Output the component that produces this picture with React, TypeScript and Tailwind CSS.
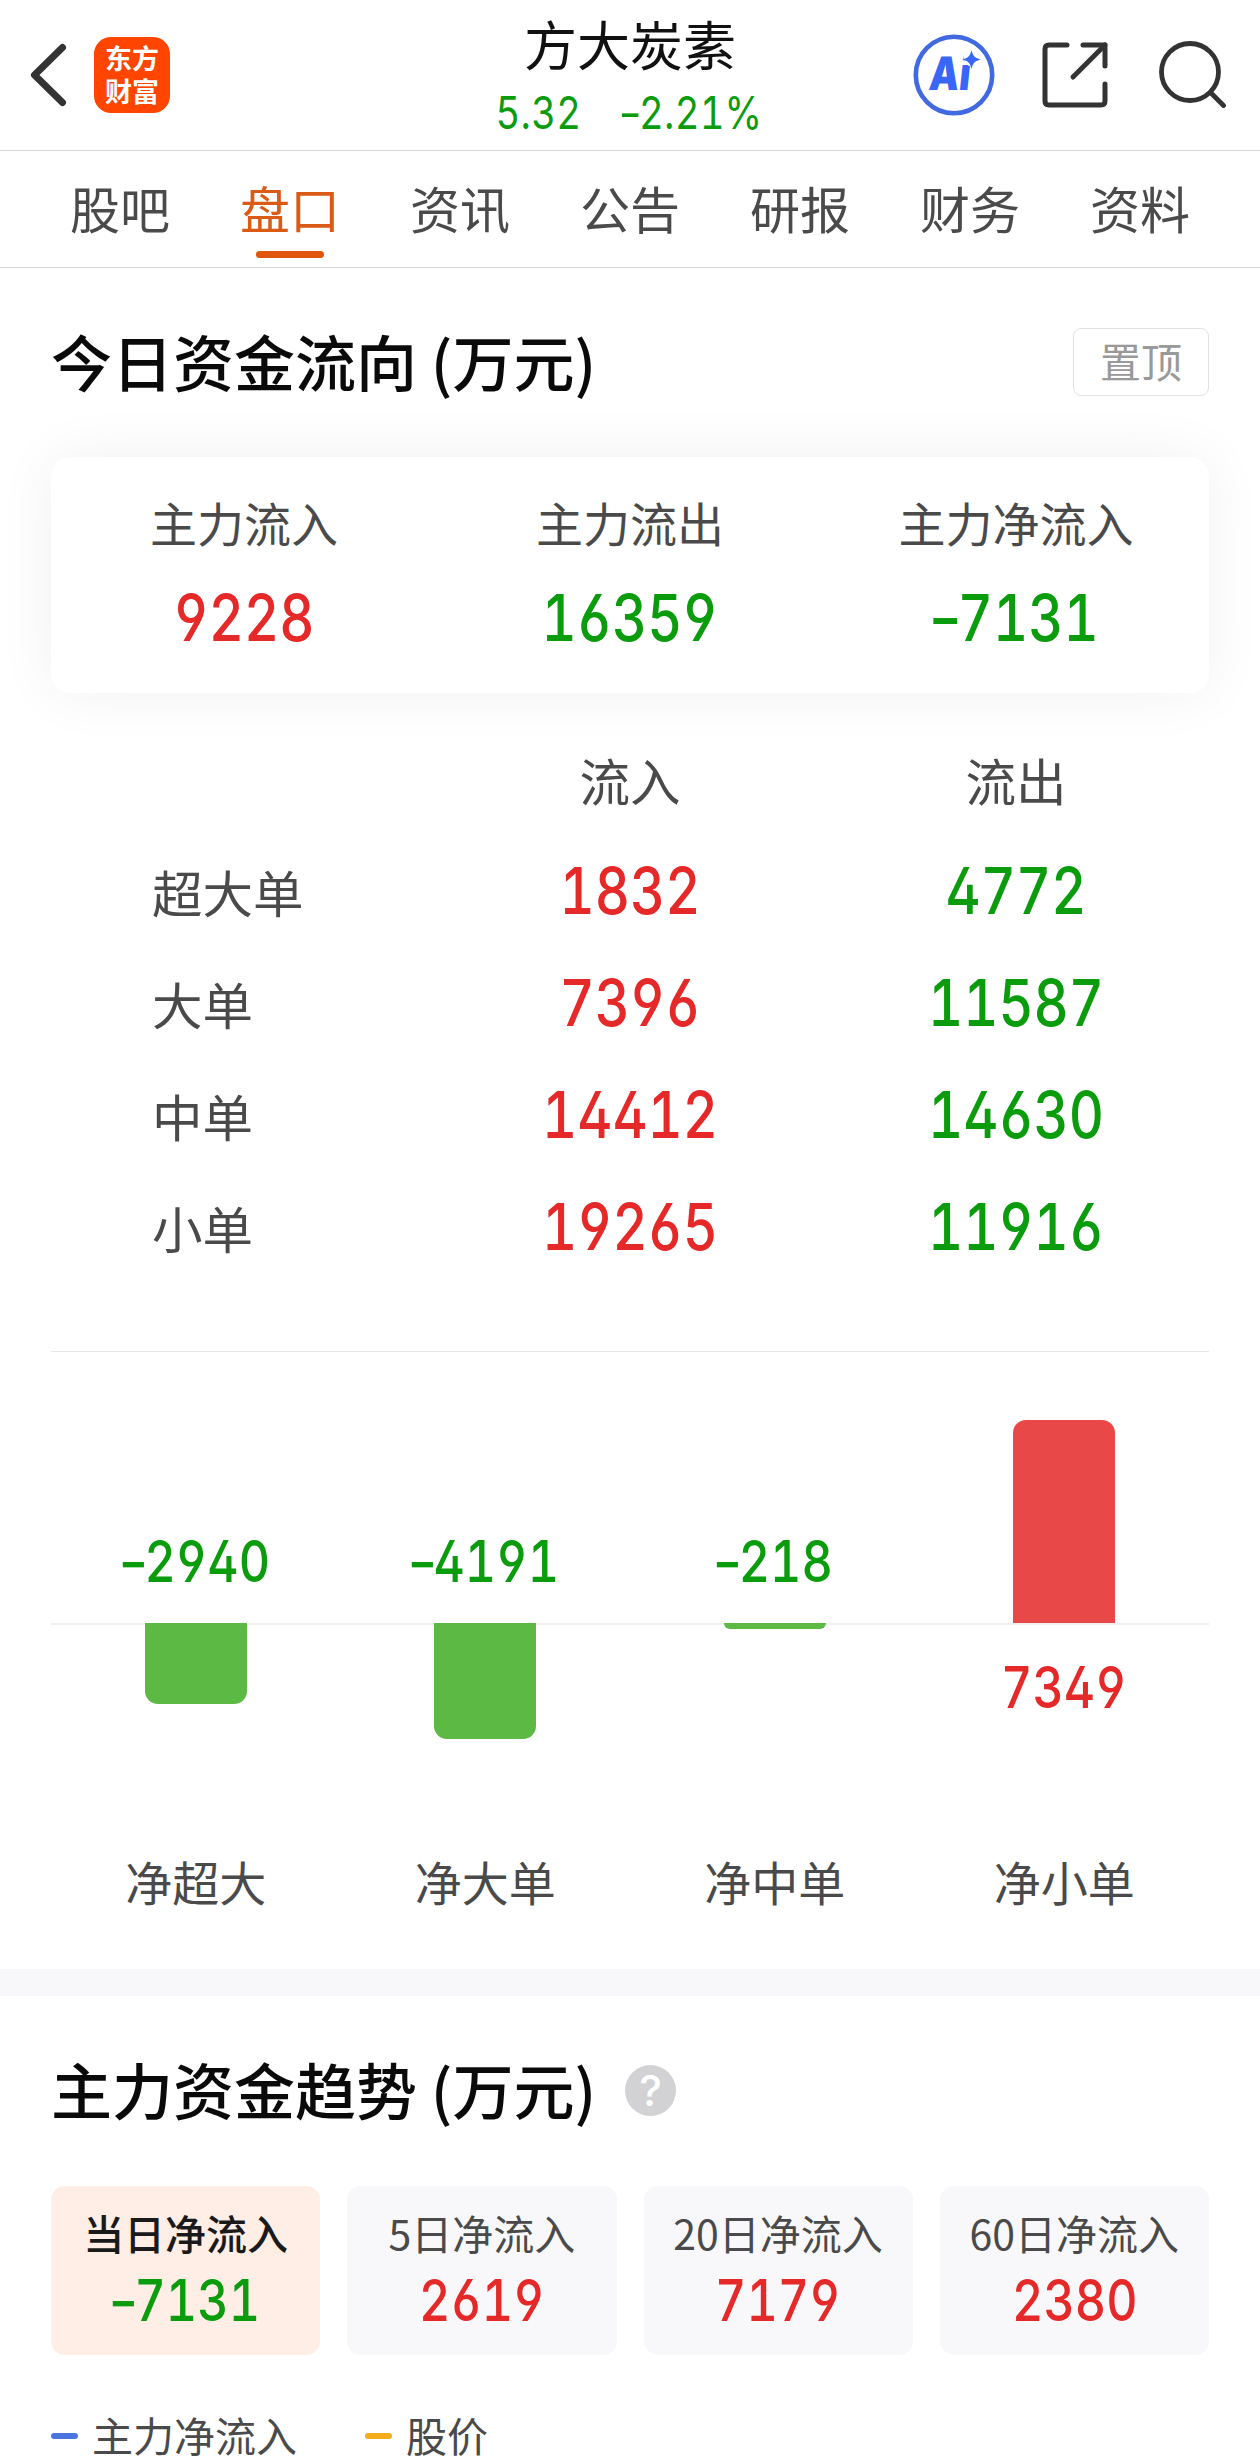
import clsx from "clsx";

const TABS = ["股吧", "盘口", "资讯", "公告", "研报", "财务", "资料"];

const SUMMARY = [
  { label: "主力流入", value: 9228, up: true },
  { label: "主力流出", value: 16359, up: false },
  { label: "主力净流入", value: -7131, up: false },
];

const ORDERS = [
  { label: "超大单", inflow: 1832, outflow: 4772 },
  { label: "大单", inflow: 7396, outflow: 11587 },
  { label: "中单", inflow: 14412, outflow: 14630 },
  { label: "小单", inflow: 19265, outflow: 11916 },
];

const NET = [
  { label: "净超大", value: -2940 },
  { label: "净大单", value: -4191 },
  { label: "净中单", value: -218 },
  { label: "净小单", value: 7349 },
];

const TREND = [
  { label: "当日净流入", value: -7131 },
  { label: "5日净流入", value: 2619 },
  { label: "20日净流入", value: 7179 },
  { label: "60日净流入", value: 2380 },
];

// tallest bar is 203px
const BAR_UNIT = 203 / 7349;

type NumProps = { up: boolean; value: number | string; light?: boolean; className?: string };

// digits are tabular, sign and punctuation keep their own width
function Num({ up, value, light, className }: NumProps) {
  return (
    <span
      className={clsx(
        "block scale-x-[0.85] whitespace-nowrap font-['Inter',sans-serif] [font-feature-settings:'tnum','cv02','cv03','cv04']",
        light ? "font-[430]" : "font-[530]",
        up ? "text-[#e52828]" : "text-[#0b9c0d]",
        className,
      )}
    >
      {String(value).split(/([^0-9])/).map((part, i) => {
        if (part === "-") {
          return (
            <span key={i} className="inline-block scale-x-[1.35] [font-feature-settings:normal]">-</span>
          );
        }
        return /^[0-9]*$/.test(part) ? (
          part
        ) : (
          <span key={i} className="[font-feature-settings:normal]">{part}</span>
        );
      })}
    </span>
  );
}

function Header() {
  return (
    <header className="grid h-[151px] grid-cols-3 border-b border-[#d5d7d6]">
      <div className="flex items-center pl-[29px]">
        <svg width="38" height="66" viewBox="0 0 38 66" fill="none" stroke="#333" strokeWidth="7">
          <path d="M33.500 5.500L5.500 33L33.500 60.500" strokeLinecap="round" strokeLinejoin="round" />
        </svg>
        <div className="ml-[27px] flex size-[76px] items-center justify-center rounded-[17px] bg-[#ff4500] pb-[3px]">
          <span className="w-[54px] text-[27px] leading-[33px] font-bold text-white">东方财富</span>
        </div>
      </div>

      <div className="flex flex-col items-center pt-[15px]">
        <h1 className="text-[53px] leading-[56px] text-[#111]">方大炭素</h1>
        <div className="mt-[20px] flex gap-[21px] pl-[2px] text-[45px] leading-[44px]">
          <Num up={false} light value="5.32" />
          <Num up={false} light value="-2.21%" />
        </div>
      </div>

      <div className="flex items-center justify-end pr-[34px]">
        <svg width="82" height="82" viewBox="0 0 82 82" className="mr-[46px]">
          <circle cx="41" cy="41" r="38.200" fill="none" stroke="#4169e1" strokeWidth="4.600" />
          <text
            transform="translate(15 56) skewX(-6) scale(0.82 1)"
            fill="#3a66f8"
            fontFamily="Inter, sans-serif"
            fontSize="46"
            fontWeight="900"
          >
            Ai
          </text>
          <circle cx="59" cy="24" r="8.500" fill="#fff" />
          <path d="M58.500 19.500Q60 24 64.500 25.500Q60 27 58.500 31.500Q57 27 52.500 25.500Q57 24 58.500 19.500Z" fill="#3a66f8" stroke="#3a66f8" strokeWidth="2" />
        </svg>
        <svg
          width="68"
          height="68"
          viewBox="0 0 68 68"
          fill="none"
          stroke="#333"
          strokeWidth="5"
          strokeLinecap="round"
          strokeLinejoin="round"
          className="mr-[49px]"
        >
          <path d="M26 4H8Q4 4 4 8V60Q4 64 8 64H60Q64 64 64 60V43" />
          <path d="M42 4H64V25" />
          <path d="M64 4L32 36" />
        </svg>
        <svg width="68" height="68" viewBox="0 0 68 68" fill="none" stroke="#333" strokeWidth="4.800" strokeLinecap="round">
          <circle cx="32" cy="31" r="28.500" />
          <path d="M53 52L65.500 64.500" />
        </svg>
      </div>
    </header>
  );
}

function Tabs() {
  return (
    <nav className="grid h-[117px] grid-cols-7 border-b border-[#d5d7d6] px-[35px] pt-[26px]">
      {TABS.map((tab) => {
        const active = tab === "盘口";
        return (
          <div key={tab} className="flex flex-col items-center text-[50px] leading-[60px]">
            <span className={active ? "text-[#d95b16]" : "text-[#4a4a4a]"}>{tab}</span>
            {active && <span className="mt-[14px] h-[7px] w-[68px] rounded-full bg-[#e0560c]" />}
          </div>
        );
      })}
    </nav>
  );
}

function SummaryCard() {
  return (
    <div className="mt-[61px] grid h-[236px] grid-cols-3 rounded-[20px] bg-white pt-[35px] shadow-[0_0_60px_rgba(0,0,0,0.06)]">
      {SUMMARY.map((item) => (
        <div key={item.label} className="flex flex-col items-center">
          <span className="text-[47px] leading-[60px] text-[#4a4a4a]">{item.label}</span>
          <Num up={item.up} value={item.value} className="mt-[34px] text-[64px] leading-[64px]" />
        </div>
      ))}
    </div>
  );
}

function OrderTable() {
  return (
    <div className="mt-[56px] border-b border-[#e6e6e6] pb-[68px] text-[50.500px] text-[#4a4a4a]">
      <div className="mb-[26px] grid grid-cols-3 text-center leading-[60px]">
        <span />
        <span>流入</span>
        <span>流出</span>
      </div>
      {ORDERS.map((row) => (
        <div key={row.label} className="grid h-[112px] grid-cols-3 items-center text-center">
          <span className="pl-[101px] text-left leading-[60px]">{row.label}</span>
          <Num up value={row.inflow} className="text-[64px] leading-[64px]" />
          <Num up={false} value={row.outflow} className="text-[64px] leading-[64px]" />
        </div>
      ))}
    </div>
  );
}

function NetChart() {
  return (
    <div>
      <div className="grid h-[271px] grid-cols-4">
        {NET.map((item) => (
          <div key={item.label} className="flex flex-col items-center justify-end">
            {item.value > 0 ? (
              <div className="w-[102px] rounded-t-[13px] bg-[#e84848]" style={{ height: item.value * BAR_UNIT }} />
            ) : (
              <Num up={false} value={item.value} className="mb-[33px] text-[57px] leading-[57px]" />
            )}
          </div>
        ))}
      </div>
      <div className="grid h-[228px] grid-cols-4 border-t-2 border-[#f0f0f0]">
        {NET.map((item) => (
          <div key={item.label} className="flex flex-col items-center">
            {item.value > 0 ? (
              <Num up value={item.value} className="mt-[34px] text-[57px] leading-[57px]" />
            ) : (
              <div
                className="-mt-[2px] w-[102px] rounded-b-[13px] bg-[#5cb944]"
                style={{ height: -item.value * BAR_UNIT }}
              />
            )}
          </div>
        ))}
      </div>
      <div className="grid grid-cols-4 text-center text-[47px] leading-[60px] text-[#4a4a4a]">
        {NET.map((item) => (
          <span key={item.label}>{item.label}</span>
        ))}
      </div>
    </div>
  );
}

function TrendCards() {
  return (
    <div className="mt-[65px] grid grid-cols-4 gap-[27px]">
      {TREND.map((item, i) => (
        <div
          key={item.label}
          className={clsx(
            "flex h-[169px] flex-col items-center rounded-[14px] pt-[21px]",
            i === 0 ? "bg-[#ffeee6]" : "bg-[#f8f8fa]",
          )}
        >
          <span
            className={clsx(
              "text-[41px] leading-[50px] whitespace-nowrap",
              i === 0 ? "font-medium text-[#1a1a1a]" : "text-[#4a4a4a]",
            )}
          >
            {item.label}
          </span>
          <Num up={item.value > 0} value={item.value} className="mt-[15px] text-[57px] leading-[57px]" />
        </div>
      ))}
    </div>
  );
}

export default function App() {
  return (
    <div className="h-[2463px] w-[1260px] overflow-hidden bg-white font-['Noto_Sans_CJK_SC',sans-serif]">
      <Header />
      <Tabs />

      <section className="px-[51px] pt-[60px] pb-[58px]">
        <div className="flex h-[68px] items-center justify-between">
          <h2 className="pb-[4px] text-[61px] leading-[61px] font-medium text-[#0a0a0a]">今日资金流向 (万元)</h2>
          <button className="h-[68px] w-[136px] rounded-[8px] border border-[#e2e2e2] pb-[4px] text-[41px] leading-[60px] text-[#999]">
            置顶
          </button>
        </div>
        <SummaryCard />
        <OrderTable />
        <NetChart />
      </section>

      <div className="h-[27px] bg-[#f8f8fa]" />

      <section className="px-[51px] pt-[64px]">
        <div className="flex h-[61px] items-center">
          <h2 className="pb-[4px] text-[61px] leading-[61px] font-medium text-[#0a0a0a]">主力资金趋势 (万元)</h2>
          <span className="ml-[29px] flex size-[51px] items-center justify-center rounded-full bg-[#d2d2d4] font-['Inter',sans-serif] text-[43px] leading-none font-medium text-white">
            ?
          </span>
        </div>
        <TrendCards />
        <div className="mt-[54px] flex text-[41px] leading-[50px] text-[#4a4a4a]">
          <div className="flex items-center">
            <span className="mt-[4px] mr-[14px] h-[6px] w-[27px] rounded-[3px] bg-[#4a74e0]" />
            主力净流入
          </div>
          <div className="ml-[68px] flex items-center">
            <span className="mt-[4px] mr-[14px] h-[6px] w-[27px] rounded-[3px] bg-[#f2ac1c]" />
            股价
          </div>
        </div>
      </section>
    </div>
  );
}
